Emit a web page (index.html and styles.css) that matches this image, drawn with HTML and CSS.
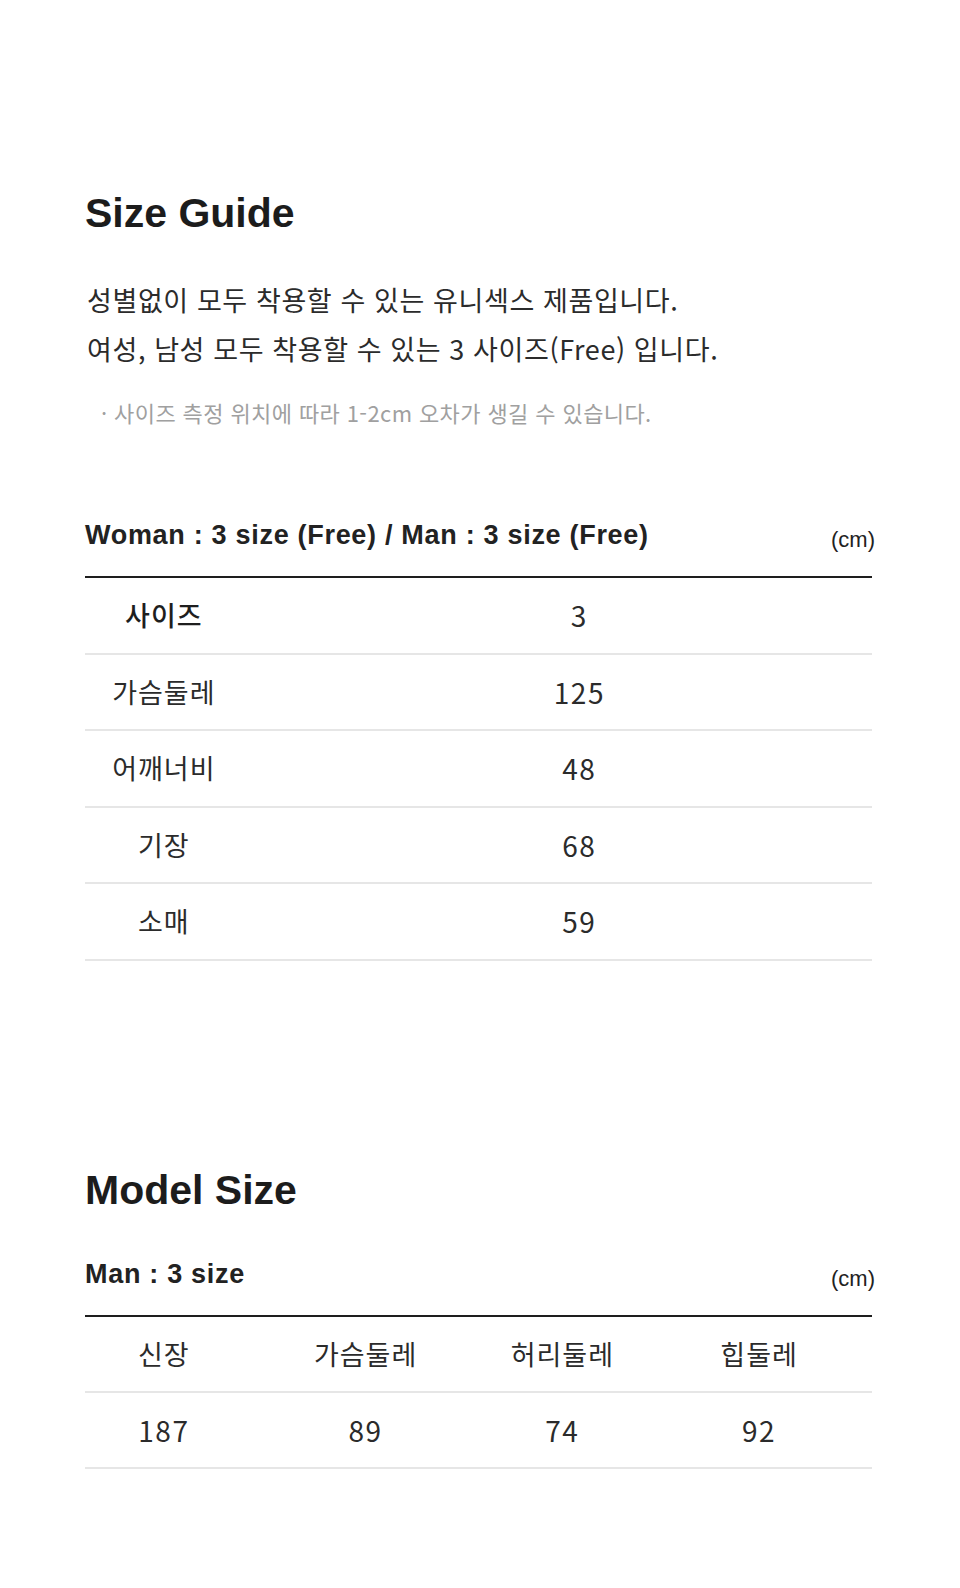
FILE: index.html
```html
<!DOCTYPE html>
<html lang="ko">
<head>
<meta charset="utf-8">
<title>Size Guide</title>
<link rel="stylesheet" href="styles.css">
</head>
<body>
<main class="page">
  <section class="guide">
    <h1 class="title">Size Guide</h1>
    <p class="desc">성별없이 모두 착용할 수 있는 유니섹스 제품입니다.<br>여성, 남성 모두 착용할 수 있는 3 사이즈(Free) 입니다.</p>
    <p class="note">· 사이즈 측정 위치에 따라 1-2cm 오차가 생길 수 있습니다.</p>

    <div class="table-head">
      <span class="caption">Woman : 3 size (Free) / Man : 3 size (Free)</span>
      <span class="unit">(cm)</span>
    </div>
    <div class="size-table">
      <div class="srow">
        <span class="label strong">사이즈</span><span class="value">3</span>
      </div>
      <div class="srow">
        <span class="label">가슴둘레</span><span class="value">125</span>
      </div>
      <div class="srow">
        <span class="label">어깨너비</span><span class="value">48</span>
      </div>
      <div class="srow">
        <span class="label">기장</span><span class="value">68</span>
      </div>
      <div class="srow">
        <span class="label">소매</span><span class="value">59</span>
      </div>
    </div>
  </section>

  <section class="model">
    <h2 class="title">Model Size</h2>
    <div class="table-head">
      <span class="caption">Man : 3 size</span>
      <span class="unit">(cm)</span>
    </div>
    <div class="model-table">
      <div class="mrow">
        <span class="cell">신장</span><span class="cell">가슴둘레</span><span class="cell">허리둘레</span><span class="cell">힙둘레</span>
      </div>
      <div class="mrow">
        <span class="cell num">187</span><span class="cell num">89</span><span class="cell num">74</span><span class="cell num">92</span>
      </div>
    </div>
  </section>
</main>
</body>
</html>
```

FILE: styles.css
```css
* {
  box-sizing: border-box;
}

html, body {
  margin: 0;
  padding: 0;
  background: #ffffff;
}

body {
  font-family: "Noto Sans CJK KR", "Noto Sans", sans-serif;
  color: #333333;
}

.page {
  width: 787px;
  margin-left: 85px;
  padding-top: 193px;
}

.title {
  margin: 0;
  font-family: "Liberation Sans", Arial, sans-serif;
  font-weight: 700;
  font-size: 41px;
  line-height: 41px;
  color: #1c1c1c;
}

.desc {
  margin: 41px 0 0 0;
  padding-left: 2px;
  font-size: 27px;
  line-height: 49px;
  letter-spacing: 0.6px;
  color: #2b2b2b;
}

.note {
  margin: 24px 0 0 16px;
  font-size: 22px;
  line-height: 30px;
  letter-spacing: 0.4px;
  color: #a0a0a0;
}

.table-head {
  display: flex;
  justify-content: space-between;
  align-items: flex-start;
  height: 30px;
  margin-top: 93px;
}

.caption {
  font-family: "Liberation Sans", Arial, sans-serif;
  font-weight: 700;
  font-size: 27px;
  line-height: 30px;
  letter-spacing: 0.7px;
  color: #222222;
}

.unit {
  margin-top: 8px;
  margin-right: -3px;
  font-family: "Liberation Sans", Arial, sans-serif;
  font-size: 22px;
  line-height: 24px;
  color: #222222;
}

.size-table {
  margin-top: 26px;
  border-top: 2px solid #1e1e1e;
}

.srow {
  display: grid;
  grid-template-columns: 1fr 3fr;
  align-items: center;
  height: 76.5px;
  border-bottom: 2px solid #e6e6e6;
}

.label {
  padding-right: 39px;
  text-align: center;
  font-size: 27px;
  line-height: 36px;
  letter-spacing: 1px;
  color: #2b2b2b;
}

.label.strong {
  font-weight: 500;
  color: #1e1e1e;
}

.value {
  padding-left: 5px;
  text-align: center;
  font-size: 28px;
  line-height: 36px;
  letter-spacing: 1.5px;
  color: #2b2b2b;
}

.model {
  margin-top: 209px;
}

.model .table-head {
  margin-top: 48px;
}

.model-table {
  margin-top: 26px;
  border-top: 2px solid #1e1e1e;
}

.mrow {
  display: grid;
  grid-template-columns: repeat(4, 1fr);
  align-items: center;
  height: 76px;
  border-bottom: 2px solid #e6e6e6;
}

.cell {
  padding-right: 29px;
  text-align: center;
  font-size: 27px;
  line-height: 36px;
  letter-spacing: 1px;
  color: #2b2b2b;
}

.cell:first-child {
  padding-right: 39px;
}

.cell.num {
  font-size: 28px;
  letter-spacing: 1.5px;
}
```
